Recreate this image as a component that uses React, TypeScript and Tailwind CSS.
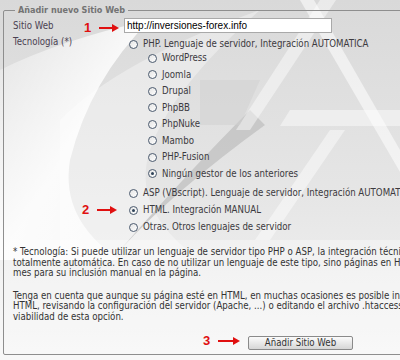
import React from "react";

const font = {
  fontFamily: '"DejaVu Sans Condensed", "DejaVu Sans", sans-serif',
  fontStretch: "condensed" as const,
};

function Radio({ checked = false }: { checked?: boolean }) {
  return (
    <span className="relative flex h-[9px] w-[9px] shrink-0 items-center justify-center rounded-full border border-[#4b5a6e] bg-gradient-to-br from-[#e4e4e4] to-white">
      {checked && <span className="h-[3px] w-[3px] rounded-full bg-[#2e4258]" />}
    </span>
  );
}

function Arrow({ w = 20 }: { w?: number }) {
  return (
    <svg width={w} height={8} viewBox={`0 0 ${w} 8`}>
      <rect x={0} y={3} width={w - 6} height={2} fill="#e01010" />
      <polygon points={`${w - 7},0 ${w},4 ${w - 7},8`} fill="#e01010" />
    </svg>
  );
}

function Mark({ n, w = 20 }: { n: string; w?: number }) {
  return (
    <div className="flex items-center gap-[8px]">
      <span
        className="text-[13px] font-bold leading-none text-[#e01010]"
        style={{ fontFamily: '"Liberation Sans", Arial, sans-serif' }}
      >
        {n}
      </span>
      <Arrow w={w} />
    </div>
  );
}

const sub = [
  "WordPress",
  "Joomla",
  "Drupal",
  "PhpBB",
  "PhpNuke",
  "Mambo",
  "PHP-Fusion",
  "Ningún gestor de los anteriores",
];

function Background() {
  return (
    <svg className="absolute inset-0" width={400} height={360} viewBox="0 0 400 360">
      <defs>
        <linearGradient id="bg" x1="0" y1="0" x2="0" y2="1">
          <stop offset="0" stopColor="#d9d9d9" />
          <stop offset="0.55" stopColor="#e6e6e6" />
          <stop offset="1" stopColor="#f5f5f5" />
        </linearGradient>
        <linearGradient id="sw" x1="0" y1="0" x2="1" y2="1">
          <stop offset="0" stopColor="#ffffff" stopOpacity="0.2" />
          <stop offset="0.5" stopColor="#ffffff" stopOpacity="0.85" />
          <stop offset="1" stopColor="#ffffff" stopOpacity="0.6" />
        </linearGradient>
      </defs>
      <rect width={400} height={360} fill="url(#bg)" />
      <path d="M0 70 Q 60 40 150 20 Q 90 80 70 160 Q 60 220 120 260 L 0 260 Z" fill="url(#sw)" />
      <path d="M60 120 Q 120 60 260 10 Q 170 90 150 150 Q 130 210 200 260 L 60 260 Z" fill="#ffffff" opacity="0.35" />
      <path d="M250 110 Q 190 170 120 250 Q 175 190 265 125 Z" fill="#c2c2c2" opacity="0.8" />
      <polygon points="320,0 336,0 250,130 236,130" fill="#ffffff" opacity="0.45" />
      <polygon points="300,0 314,0 400,150 400,172" fill="#ffffff" opacity="0.55" />
      <polygon points="200,80 260,80 240,125 200,125" fill="#cfcfcf" opacity="0.5" />
      <polygon points="290,110 400,110 400,126 280,126" fill="#ffffff" opacity="0.45" />
      <polygon points="330,130 345,130 270,240 255,240" fill="#ffffff" opacity="0.45" />
      <rect x={0} y={240} width={400} height={120} fill="#ffffff" opacity="0.35" />
    </svg>
  );
}

export default function App() {
  return (
    <div
      className="relative h-[360px] w-[400px] overflow-hidden bg-[#e6e6e6] text-[9.6px] text-[#3c3a40]"
      style={font}
    >
      <Background />
      <div className="relative pl-[3px] pt-[4px]">
        <fieldset className="h-[351px] w-[440px] rounded-[2px] border border-[#8e8e8e] pl-[9px]">
          <legend className="ml-[2px] px-[3px] text-[9px] font-bold leading-[12px] text-[#737373]">
            Añadir nuevo Sitio Web
          </legend>

          <div className="mt-[2px] flex items-center">
            <div className="w-[111px] leading-[12px] text-[#4a4252]">Sitio Web</div>
            <div
              className="flex h-[15px] w-[208px] items-center border border-[#a9a9a9] bg-white pl-[2px] text-[10px] text-black"
              style={{ fontFamily: '"Liberation Sans", Arial, sans-serif' }}
            >
              http://inversiones-forex.info
            </div>
          </div>

          <div className="flex">
            <div className="w-[111px] pt-[3px] leading-[12px] text-[#4a4252]">Tecnología (*)</div>
            <div className="flex flex-col pl-[5px] pt-[6px]">
              <div className="flex h-[10px] items-center gap-[5px] whitespace-nowrap">
                <Radio />
                <span>PHP. Lenguaje de servidor, Integración AUTOMATICA</span>
              </div>
              <div className="flex flex-col pl-[19px] pt-[1px]">
                {sub.map((s, i) => (
                  <div key={s} className="flex h-[16.5px] items-center gap-[5px] whitespace-nowrap">
                    <Radio checked={i === sub.length - 1} />
                    <span>{s}</span>
                  </div>
                ))}
              </div>
              <div className="mt-[3px] flex flex-col">
                <div className="flex h-[17px] items-center gap-[5px] whitespace-nowrap">
                  <Radio />
                  <span>ASP (VBscript). Lenguaje de servidor, Integración AUTOMATICA</span>
                </div>
                <div className="flex h-[17px] items-center gap-[5px] whitespace-nowrap">
                  <Radio checked />
                  <span>HTML. Integración MANUAL</span>
                </div>
                <div className="flex h-[17px] items-center gap-[5px] whitespace-nowrap">
                  <Radio />
                  <span>Otras. Otros lenguajes de servidor</span>
                </div>
              </div>
            </div>
          </div>

          <div className="mt-[11px] whitespace-nowrap leading-[10.7px] text-[#333]">
            * Tecnología: Si puede utilizar un lenguaje de servidor tipo PHP o ASP, la integración técnica es
            <br />
            totalmente automática. En caso de no utilizar un lenguaje de este tipo, sino páginas en HTML, le informa-
            <br />
            mes para su inclusión manual en la página.
          </div>
          <div className="mt-[11.5px] whitespace-nowrap leading-[10.7px] text-[#333]">
            Tenga en cuenta que aunque su página esté en HTML, en muchas ocasiones es posible incluir código
            <br />
            HTML, revisando la configuración del servidor (Apache, ...) o editando el archivo .htaccess, consulte la
            <br />
            viabilidad de esta opción.
          </div>

          <div className="mt-[13px] flex pl-[235px]">
            <div className="flex h-[14px] w-[105px] items-center justify-center rounded-[2px] border border-[#8a8a8a] bg-gradient-to-b from-[#fbfbfb] to-[#d6d6d6] text-[#333]">
              Añadir Sitio Web
            </div>
          </div>
        </fieldset>
      </div>

      <div className="absolute left-[84px] top-[21px]">
        <Mark n="1" />
      </div>
      <div className="absolute left-[82px] top-[203px]">
        <Mark n="2" />
      </div>
      <div className="absolute left-[203px] top-[334px]">
        <Mark n="3" w={22} />
      </div>
    </div>
  );
}
